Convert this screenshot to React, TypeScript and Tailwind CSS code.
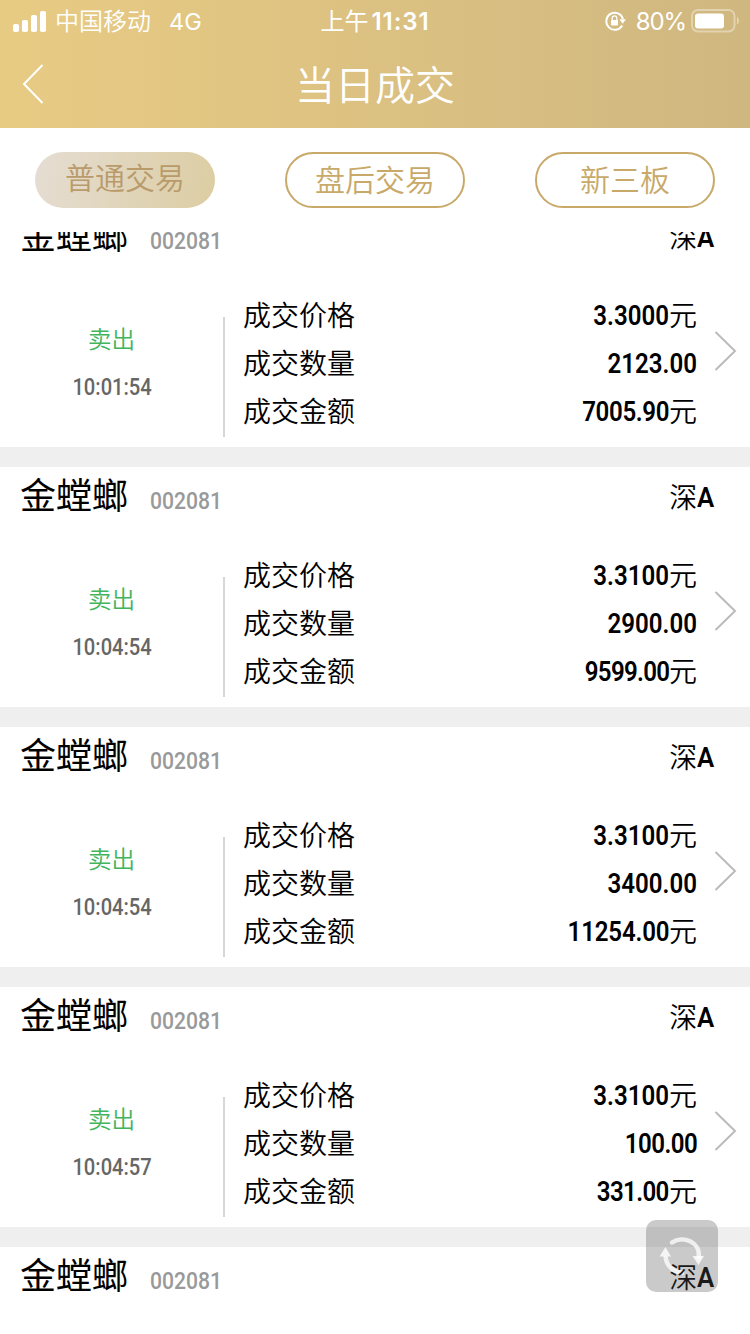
import clsx from 'clsx'

type Deal = {
  price: string
  amount: string
  total: string
  time: string
  amountSpacing?: string
  totalSpacing?: string
}

const tabs = ['普通交易', '盘后交易', '新三板']

const deals: Deal[] = [
  { price: '3.3000', amount: '2123.00', total: '7005.90', time: '10:01:54', totalSpacing: 'tracking-[-0.4px]' },
  { price: '3.3100', amount: '2900.00', total: '9599.00', time: '10:04:54', totalSpacing: 'tracking-[-0.8px]' },
  { price: '3.3100', amount: '3400.00', total: '11254.00', time: '10:04:54', totalSpacing: 'tracking-[-0.2px]' },
  {
    price: '3.3100',
    amount: '100.00',
    total: '331.00',
    time: '10:04:57',
    amountSpacing: 'tracking-[-0.6px]',
    totalSpacing: 'tracking-[-0.7px]'
  }
]

function StatusBar() {
  return (
    <div className="grid h-10 grid-cols-3 items-center text-2xl leading-10">
      <div className="flex items-center pl-[13px]">
        <svg width="33" height="21" viewBox="0 0 33 21" fill="currentColor">
          <rect x="0" y="13" width="6" height="8" rx="1.8" />
          <rect x="9" y="9" width="6" height="12" rx="1.8" />
          <rect x="18" y="4" width="6" height="17" rx="1.8" />
          <rect x="27" y="0" width="6" height="21" rx="1.8" />
        </svg>
        <span className="ml-[9px] pb-0.5 font-[350]">中国移动</span>
        <span className="ml-[18px] pt-0.5 font-[Inter] text-[23.5px]">4G</span>
      </div>
      <div className="flex items-center justify-center whitespace-nowrap">
        <span className="pb-0.5">上午</span>
        <span className="ml-[3px] pt-0.5 font-[Inter] text-[24px] font-semibold tracking-[0.9px]">11:31</span>
      </div>
      <div className="flex items-center justify-end pr-2.5">
        <svg width="21" height="20" viewBox="0 0 21 20" fill="none">
          <path d="M17.2 14.5A8.5 8.5 0 1 1 18 8" stroke="currentColor" strokeWidth="2" />
          <path d="M14.5 8.2h6.4l-3.2 4.6z" fill="currentColor" />
          <rect x="6" y="9" width="7" height="5.5" rx=".8" fill="currentColor" />
          <path d="M7.2 9.500V7.200a2.300 2.300 0 0 1 4.600 0v2.300" stroke="currentColor" strokeWidth="1.300" />
        </svg>
        <span className="ml-[10px] pt-0.5 font-[Inter] text-[24px] tracking-[-1.1px]">80%</span>
        <svg className="ml-[5px]" width="49" height="24" viewBox="0 0 49 24" fill="none">
          <rect x="1" y="1" width="42.500" height="21.500" rx="6" stroke="#fff" strokeOpacity=".38" strokeWidth="2" />
          <rect x="4" y="4.500" width="29" height="15" rx="3" fill="#fff" />
          <path d="M46 8c2.500 1 2.500 6.500 0 7.500z" fill="#fff" fillOpacity=".45" />
        </svg>
      </div>
    </div>
  )
}

type ValueProps = {
  label: string
  value: string
  unit?: string
  spacing?: string
}

function Value({ label, value, unit, spacing }: ValueProps) {
  return (
    <div className="flex h-12 justify-between">
      <span>{label}</span>
      <span className="flex">
        <span className={clsx('origin-right scale-x-[0.86] pt-0.5 font-[Roboto] font-semibold', spacing)}>{value}</span>
        {unit && <span>{unit}</span>}
      </span>
    </div>
  )
}

function StockHeader({ overlapped }: { overlapped?: boolean }) {
  return (
    <div className="flex h-[84px] items-start pt-1 pr-9 pl-[21px]">
      <h2 className="-mt-px -ml-px w-[130px] text-[36px] leading-[46px]">金螳螂</h2>
      <span className="origin-left scale-x-[0.88] pt-1.5 font-[Roboto] text-2xl leading-[48px] font-medium text-[#999]">
        002081
      </span>
      <span
        className={clsx(
          'ml-auto flex pt-px text-[28px] leading-[48px]',
          overlapped && 'relative z-20 text-[#1a1a1a]'
        )}
      >
        <span className="font-[350]">深</span>
        <span className="-mr-[2px] origin-left scale-x-[0.92] pt-0.5 font-[Roboto] font-semibold">A</span>
      </span>
    </div>
  )
}

function DealCard({ deal }: { deal: Deal }) {
  return (
    <section className="h-[260px] shrink-0 border-b-[20px] border-[#efefef] bg-white">
      <StockHeader />
      <div className="flex h-[156px] text-[28px] leading-[46px] font-[350]">
        <div className="flex w-[223px] flex-col items-center pt-6 text-2xl leading-[46px]">
          <span className="h-12 text-[23.5px] text-[#42b45c]">卖出</span>
          <span className="scale-x-[0.84] pt-px pl-0.5 font-[Roboto] font-medium text-[#666]">{deal.time}</span>
        </div>
        <div className="mt-[26px] h-[120px] w-0.5 bg-[#d6d6d6]" />
        <div className="ml-[18px] w-[454px]">
          <Value label="成交价格" value={deal.price} unit="元" />
          <Value label="成交数量" value={deal.amount} spacing={deal.amountSpacing} />
          <Value label="成交金额" value={deal.total} unit="元" spacing={deal.totalSpacing} />
        </div>
        <svg className="mt-10 ml-[17px]" width="24" height="40" viewBox="0 0 24 40" fill="none">
          <path d="M1.500 1 21 20 1.500 39" stroke="#bbb" strokeWidth="2" />
        </svg>
      </div>
    </section>
  )
}

export default function App() {
  return (
    <div className="relative flex h-[1334px] w-[750px] flex-col overflow-hidden bg-white font-['Noto_Sans_CJK_SC',sans-serif] text-black">
      <header className="h-32 shrink-0 bg-linear-to-r from-[#e8cb83] to-[#cfb780] text-white">
        <StatusBar />
        <div className="grid h-[88px] grid-cols-[1fr_auto_1fr] items-center">
          <svg className="ml-[22px]" width="22" height="40" viewBox="0 0 22 40" fill="none">
            <path d="M20.500 1 2 20 20.500 39" stroke="currentColor" strokeWidth="2" />
          </svg>
          <h1 className="h-[88px] text-[40px] leading-[86px] font-[350]">当日成交</h1>
        </div>
      </header>

      <nav className="flex h-[104px] shrink-0 items-center justify-between px-[35px] text-[30px]">
        {tabs.map((tab, index) => (
          <button
            key={tab}
            className={clsx(
              'flex h-14 w-[180px] justify-center rounded-full font-[350]',
              index === 0
                ? 'bg-linear-[100deg] from-[#e5ddd3] to-[#dccda2] leading-[48px] text-[#b99b6b]'
                : 'border-2 border-[#c8a96a] leading-[48px] text-[#c8a96a]'
            )}
          >
            {tab}
          </button>
        ))}
      </nav>

      <main className="flex min-h-0 flex-1 flex-col overflow-hidden">
        <div className="-mt-[25px]">
          {deals.map((deal, index) => (
            <DealCard key={index} deal={deal} />
          ))}
          <StockHeader overlapped />
        </div>
      </main>

      {/* floating refresh button */}
      <button className="absolute top-[1220px] left-[646px] z-10 size-[72px] rounded-[10px] bg-[#505050]/30">
        <svg width="72" height="72" viewBox="0 0 72 72" fill="none">
          <g stroke="#fff" strokeOpacity=".75" strokeWidth="4.500">
            <path d="M26 22.500C37 15 54.500 22 52.800 37" strokeLinecap="round" />
            <path d="M19.500 36C20 47 29 53 38 52.500" />
          </g>
          <path d="M46.500 36h11.500l-5.500 9zM13.500 36.500h11.500l-5.500-9.500z" fill="#fff" fillOpacity=".8" />
        </svg>
      </button>
    </div>
  )
}
